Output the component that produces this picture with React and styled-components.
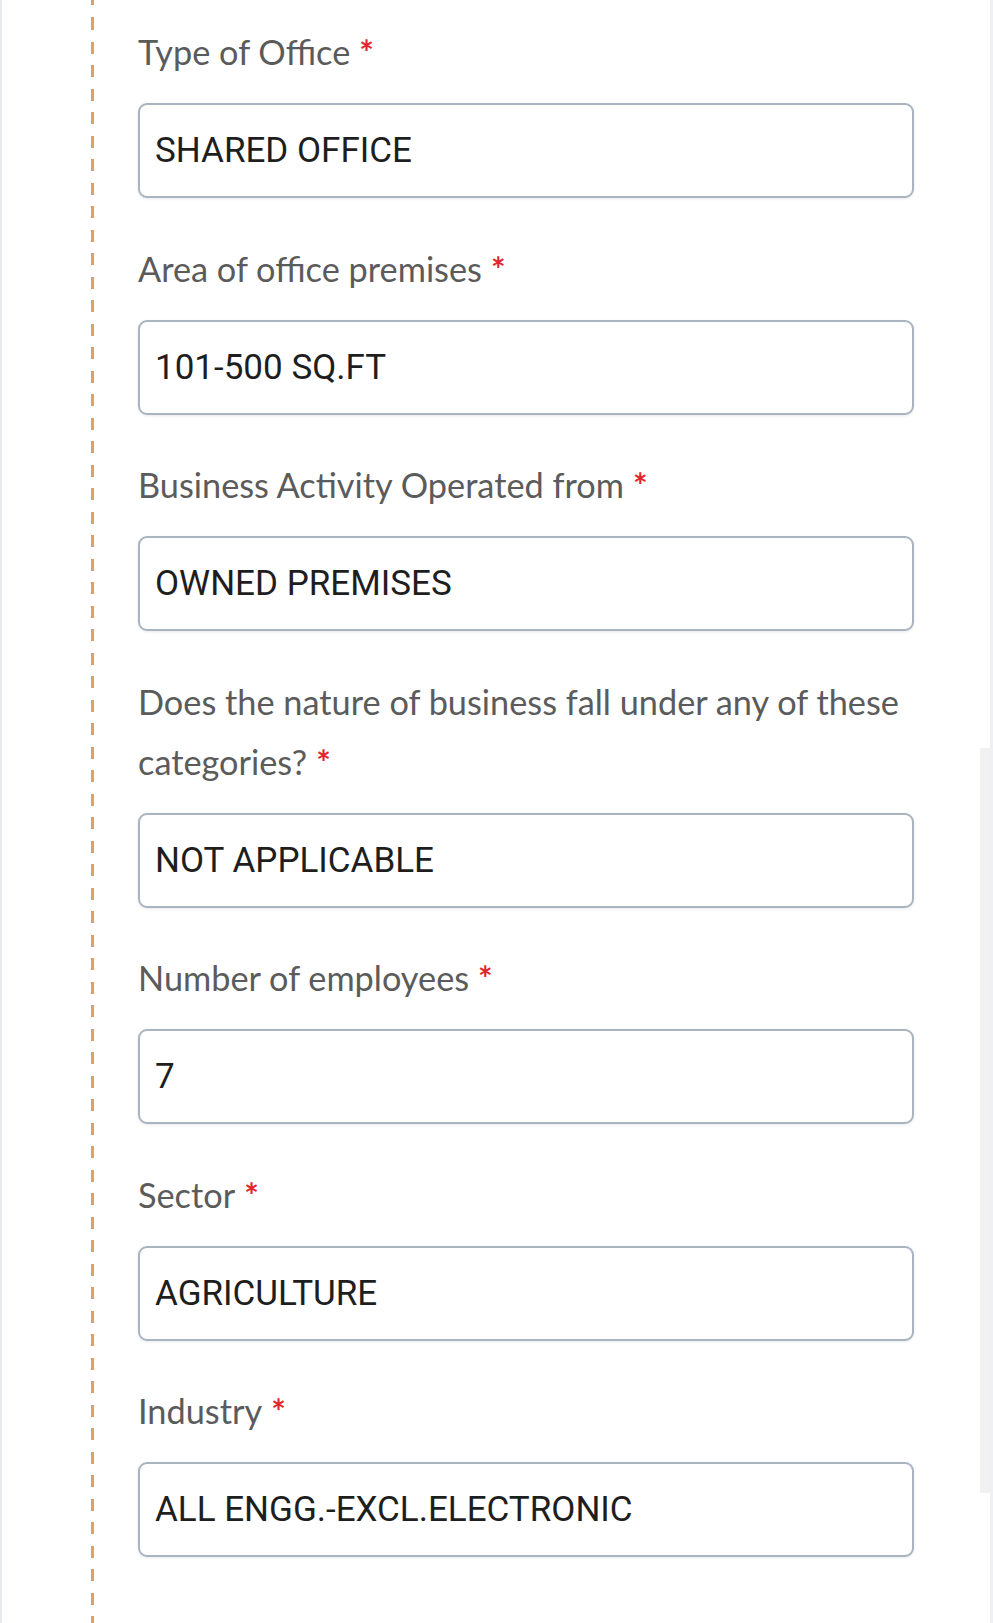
import React from "react";
import styled, { createGlobalStyle } from "styled-components";

const Global = createGlobalStyle`
  html, body { margin: 0; padding: 0; background: #ffffff; }
  #root { min-height: 1623px; }
`;

const Page = styled.div`
  position: relative;
  display: flex;
  align-items: stretch;
  min-height: 1623px;
  box-sizing: border-box;
  background: #ffffff;
  border-left: 2px solid #e6ebf0;
  border-right: 3px solid #eef0f3;
  overflow: hidden;
`;

const Rail = styled.div`
  flex: 0 0 3px;
  margin-left: 89px;
  background-image: repeating-linear-gradient(
    to bottom,
    #dfa062 0px,
    #dfa062 12px,
    transparent 12px,
    transparent 23.5px
  );
  background-position: 0 18px;
`;

const Form = styled.div`
  display: flex;
  flex-direction: column;
  width: 776px;
  margin-left: 44px;
  padding-top: 22px;
`;

const Field = styled.div`
  display: flex;
  flex-direction: column;
  margin-bottom: 40.5px;
`;

const Label = styled.label`
  font-family: "Lato", "Open Sans", sans-serif;
  font-size: 34.3px;
  line-height: 60px;
  color: #5b5b5b;
  margin-bottom: 21px;
`;

const Star = styled.span`
  color: #e0262a;
  font-weight: 700;
  margin-left: 9px;
`;

const Box = styled.div`
  box-sizing: border-box;
  height: 95px;
  display: flex;
  align-items: center;
  padding: 0 15px;
  border: 2px solid #a9b4c0;
  border-radius: 9px;
  box-shadow: 0 1px 3px rgba(60, 80, 100, 0.12);
  font-family: "Roboto", "Liberation Sans", sans-serif;
  font-size: 35px;
  color: #1e1e1e;
  background: #ffffff;
`;

const ScrollTrack = styled.div`
  position: absolute;
  right: 0;
  top: 748px;
  width: 10px;
  height: 745px;
  background: #f1f1f2;
`;

const fields = [
  { label: "Type of Office", value: "SHARED OFFICE" },
  { label: "Area of office premises", value: "101-500 SQ.FT" },
  { label: "Business Activity Operated from", value: "OWNED PREMISES" },
  {
    label: "Does the nature of business fall under any of these categories?",
    value: "NOT APPLICABLE",
  },
  { label: "Number of employees", value: "7" },
  { label: "Sector", value: "AGRICULTURE" },
  { label: "Industry", value: "ALL ENGG.-EXCL.ELECTRONIC" },
];

export default function App() {
  return (
    <>
      <Global />
      <Page>
        <Rail />
        <Form>
          {fields.map((f) => (
            <Field key={f.label}>
              <Label>
                {f.label}
                <Star>*</Star>
              </Label>
              <Box>{f.value}</Box>
            </Field>
          ))}
        </Form>
        <ScrollTrack />
      </Page>
    </>
  );
}
